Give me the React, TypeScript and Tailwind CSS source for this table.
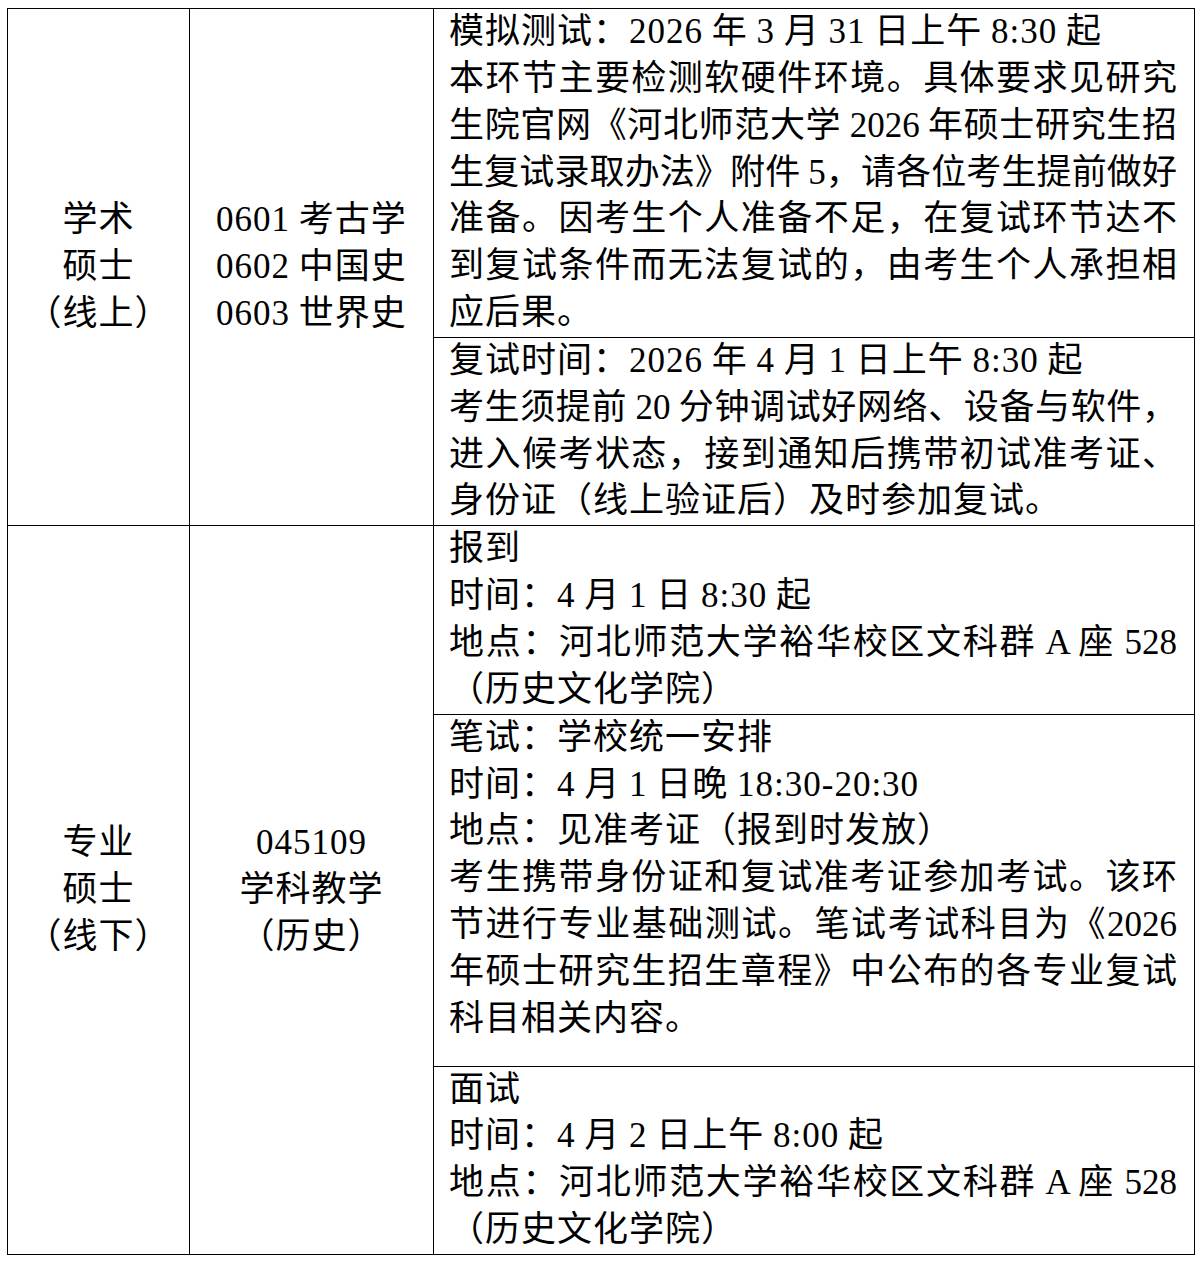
type LineProps = { text: string; j?: boolean };

// one physical line of the cell; j = stretched to the full width (Word's justify)
const Line = ({ text, j }: LineProps) => (
  <div
    className={
      j
        ? "whitespace-nowrap tracking-normal text-justify [text-align-last:justify]"
        : "whitespace-nowrap"
    }
  >
    {text}
  </div>
);

type Block = { lines: LineProps[]; extra?: boolean };

type Row = {
  type: string[];
  major: string[];
  blocks: Block[];
};

const rows: Row[] = [
  {
    type: ["学术", "硕士", "（线上）"],
    major: ["0601 考古学", "0602 中国史", "0603 世界史"],
    blocks: [
      {
        lines: [
          { text: "模拟测试：2026 年 3 月 31 日上午 8:30 起" },
          { text: "本环节主要检测软硬件环境。具体要求见研究", j: true },
          { text: "生院官网《河北师范大学 2026 年硕士研究生招", j: true },
          { text: "生复试录取办法》附件 5，请各位考生提前做好", j: true },
          { text: "准备。因考生个人准备不足，在复试环节达不", j: true },
          { text: "到复试条件而无法复试的，由考生个人承担相", j: true },
          { text: "应后果。" },
        ],
      },
      {
        lines: [
          { text: "复试时间：2026 年 4 月 1 日上午 8:30 起" },
          { text: "考生须提前 20 分钟调试好网络、设备与软件，", j: true },
          { text: "进入候考状态，接到通知后携带初试准考证、", j: true },
          { text: "身份证（线上验证后）及时参加复试。" },
        ],
      },
    ],
  },
  {
    type: ["专业", "硕士", "（线下）"],
    major: ["045109", "学科教学", "（历史）"],
    blocks: [
      {
        lines: [
          { text: "报到" },
          { text: "时间：4 月 1 日 8:30 起" },
          { text: "地点：河北师范大学裕华校区文科群 A 座 528", j: true },
          { text: "（历史文化学院）" },
        ],
      },
      {
        extra: true,
        lines: [
          { text: "笔试：学校统一安排" },
          { text: "时间：4 月 1 日晚 18:30-20:30" },
          { text: "地点：见准考证（报到时发放）" },
          { text: "考生携带身份证和复试准考证参加考试。该环", j: true },
          { text: "节进行专业基础测试。笔试考试科目为《2026", j: true },
          { text: "年硕士研究生招生章程》中公布的各专业复试", j: true },
          { text: "科目相关内容。" },
        ],
      },
      {
        lines: [
          { text: "面试" },
          { text: "时间：4 月 2 日上午 8:00 起" },
          { text: "地点：河北师范大学裕华校区文科群 A 座 528", j: true },
          { text: "（历史文化学院）" },
        ],
      },
    ],
  },
];

export default function App() {
  return (
    <div className="min-h-[1264px] bg-white pt-[8px] pl-[7px] text-black [font-family:'Liberation_Serif','Noto_Sans_CJK_SC',serif] text-[35px] leading-[46.85px] tracking-[1px] [word-spacing:-1px]">
      <div className="w-[1188px] border border-black">
        {rows.map((row, i) => (
          <div
            key={i}
            className={`flex ${i < rows.length - 1 ? "border-b border-black" : ""}`}
          >
            {/* 类别 */}
            <div className="flex w-[182px] shrink-0 flex-col items-center justify-center border-r border-black">
              {row.type.map((t) => (
                <div key={t}>{t}</div>
              ))}
            </div>

            {/* 专业 */}
            <div className="flex w-[244px] shrink-0 flex-col items-center justify-center border-r border-black">
              {row.major.map((t) => (
                <div key={t} className="whitespace-nowrap">
                  {t}
                </div>
              ))}
            </div>

            {/* 安排 */}
            <div className="flex flex-1 flex-col">
              {row.blocks.map((b, k) => (
                <div
                  key={k}
                  className={`pl-[15px] pr-[17px] ${
                    k < row.blocks.length - 1 ? "border-b border-black" : ""
                  } ${b.extra ? "pb-[23px]" : ""}`}
                >
                  {b.lines.map((l, n) => (
                    <Line key={n} text={l.text} j={l.j} />
                  ))}
                </div>
              ))}
            </div>
          </div>
        ))}
      </div>
    </div>
  );
}
